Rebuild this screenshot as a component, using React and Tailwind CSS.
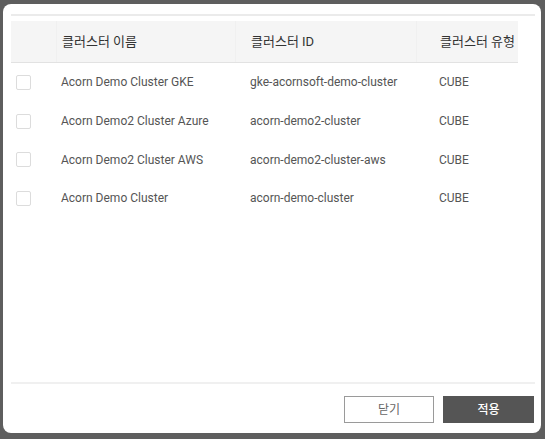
import React from "react";

const clusters = [
  { name: "Acorn Demo Cluster GKE", id: "gke-acornsoft-demo-cluster", type: "CUBE" },
  { name: "Acorn Demo2 Cluster Azure", id: "acorn-demo2-cluster", type: "CUBE" },
  { name: "Acorn Demo2 Cluster AWS", id: "acorn-demo2-cluster-aws", type: "CUBE" },
  { name: "Acorn Demo Cluster", id: "acorn-demo-cluster", type: "CUBE" },
];

const font = { fontFamily: "Roboto, 'Noto Sans CJK KR', sans-serif" };

export default function App() {
  return (
    <div className="w-[545px] h-[439px] bg-[#5e5e5e] pt-[4px] pl-[3px]" style={font}>
      <div className="w-[538px] h-[429px] bg-white rounded-[8px] flex flex-col pl-[8px] pr-[6px] pt-[10px]">
        <div className="h-[2px] bg-[#ebebeb]" />
        <div className="h-[5px]" />
        <div className="w-[507px]">
          <div className="grid grid-cols-[45px_179px_181px_102px] h-[42px] bg-[#f5f5f5] border-b border-[#e2e2e2] text-[13px] text-[#333]">
            <div />
            <div className="flex items-center pl-[5px] border-l border-[#f0f0f0]">클러스터 이름</div>
            <div className="flex items-center pl-[15px] border-l border-[#f0f0f0]">클러스터 ID</div>
            <div className="flex items-center pl-[23px] border-l border-[#f0f0f0]">클러스터 유형</div>
          </div>
          {clusters.map(function(c) {
            return (
              <div key={c.id} className="grid grid-cols-[45px_179px_181px_102px] h-[38.7px] text-[12px] text-[#555]">
                <div className="flex items-center pl-[5px]">
                  <span className="w-[15px] h-[15px] border border-[#dcdcdc] rounded-[2px] bg-white" />
                </div>
                <div className="flex items-center pl-[5px]">{c.name}</div>
                <div className="flex items-center pl-[15px]">{c.id}</div>
                <div className="flex items-center pl-[23px]">{c.type}</div>
              </div>
            );
          })}
        </div>
        <div className="flex-1" />
        <div className="h-[2px] bg-[#f0f0f0]" />
        <div className="flex justify-end gap-[9px] pt-[12px] pb-[10px] pr-[1px]">
          <button className="w-[90px] h-[27px] border border-[#9a9a9a] bg-white text-[12px] text-[#666]">닫기</button>
          <button className="w-[91px] h-[27px] bg-[#555] text-[12px] text-white font-medium">적용</button>
        </div>
      </div>
    </div>
  );
}
